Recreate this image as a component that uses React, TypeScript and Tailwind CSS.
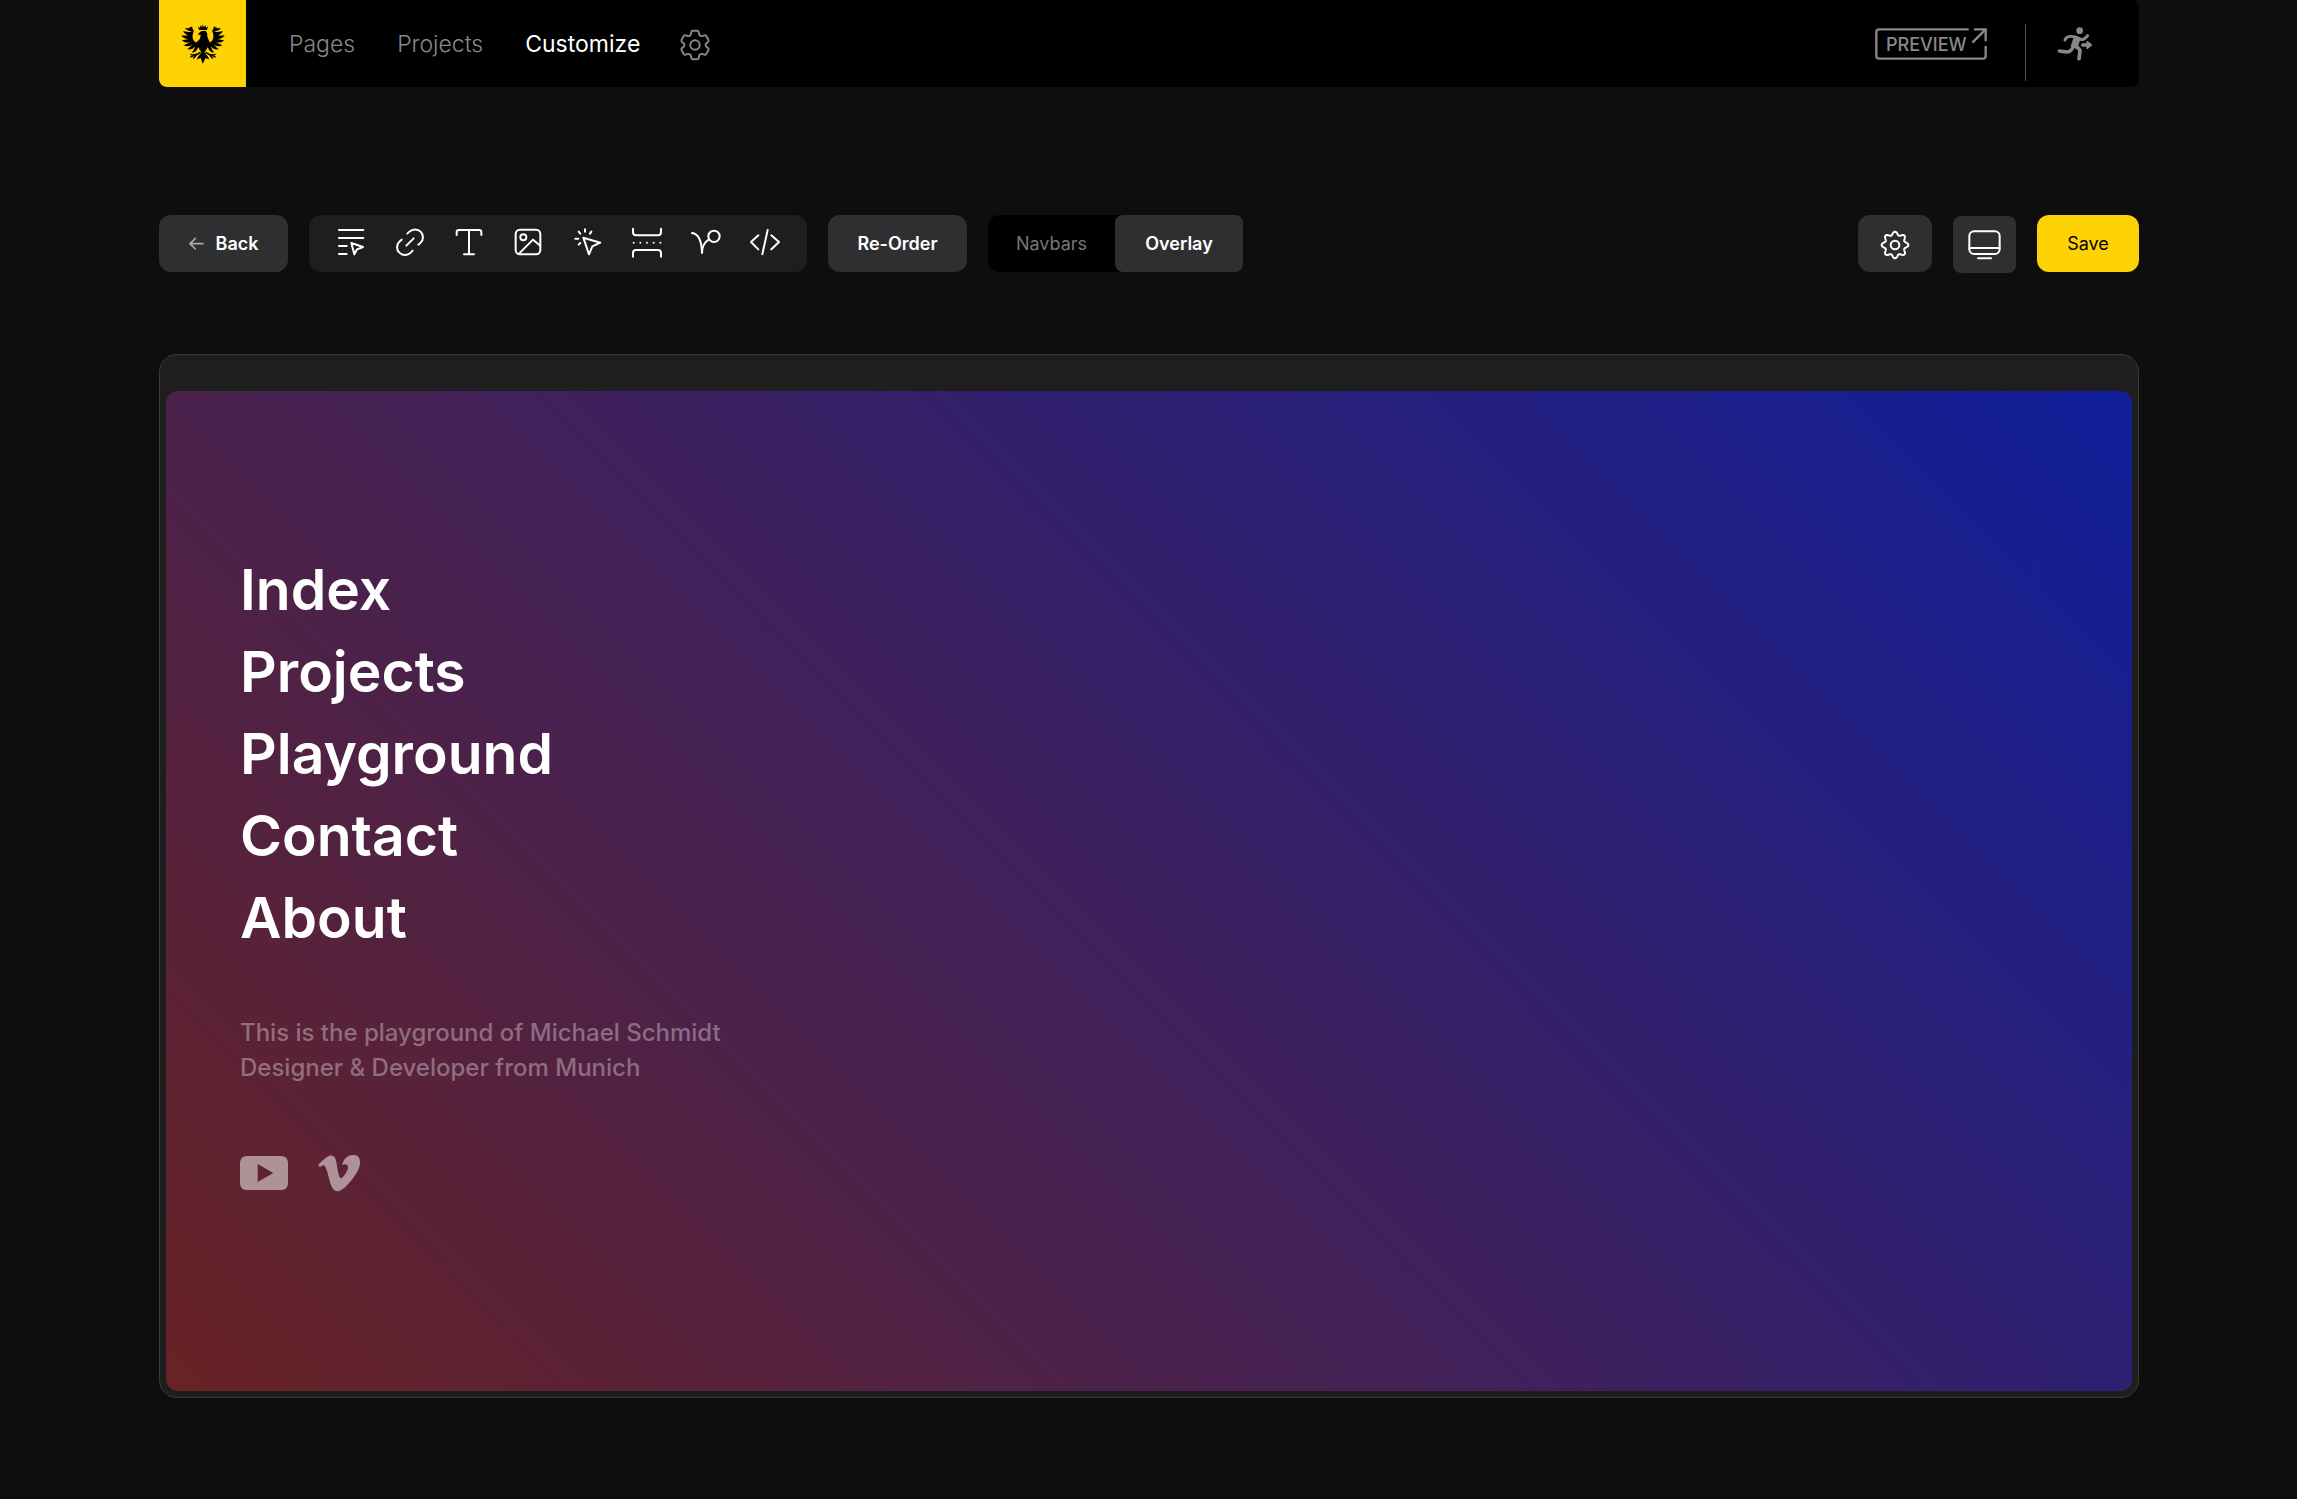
import React from 'react';
import { HiOutlineCog6Tooth } from 'react-icons/hi2';
import { FaVimeoV } from 'react-icons/fa';

const navItems = [
    { label: 'Pages', href: '#pages' },
    { label: 'Projects', href: '#projects' },
    { label: 'Customize', href: '#customize', active: true },
];

const overlayLinks = ['Index', 'Projects', 'Playground', 'Contact', 'About'];

const tools = [
    {
        label: 'Text link',
        art: (
            <>
                <path d="M9 9H82M9 33H82M9 57H32M9 81H32" />
                <path d="M46 48L81 60L63 67L55 82Z" />
            </>
        ),
    },
    {
        label: 'Link',
        art: (
            <>
                <path d="M37 20L43 14C53 5 68 5 77 14C86 23 86 38 77 47L70 53" />
                <path d="M53 71L47 77C37 86 22 86 13 77C4 68 4 53 13 44L20 38" />
                <path d="M34 56L56 34" />
            </>
        ),
    },
    {
        label: 'Text',
        art: <path d="M8 24V16Q8 9 15 9H75Q82 9 82 16V24M45 9V82M30 82H60" />,
    },
    {
        label: 'Image',
        art: (
            <>
                <rect x="8" y="8" width="74" height="74" rx="13" />
                <circle cx="31" cy="31" r="9" />
                <path d="M18 80L60 38L82 56" />
            </>
        ),
    },
    {
        label: 'Button',
        art: (
            <>
                <path d="M31 32L82 47L58 58L48 82Z" />
                <path d="M36 7V14M17 14L22 20M55 14L51 20M7 35H16M17 53L22 48" />
            </>
        ),
    },
    {
        label: 'Spacer',
        art: (
            <>
                <path d="M3 5V16Q3 25 12 25H78Q87 25 87 16V5" />
                <path d="M3 89V78Q3 69 12 69H78Q87 69 87 78V89" />
                <path d="M5 47H86" strokeDasharray="0 20" />
            </>
        ),
    },
    {
        label: 'Lottie',
        art: (
            <>
                <path d="M3 18C22 20 32 44 33 78C33 58 40 46 53 38" />
                <circle cx="69" cy="28" r="17" />
            </>
        ),
    },
    {
        label: 'Code',
        art: <path d="M25 25L3 45L25 67M53 9L37 82M64 25L87 45L64 67" />,
    },
];

// Outline of a soft gear with eight teeth, the first one pointing up
const gearOutline = Array.from({ length: 160 }, (_, i) => {
    const angle = (i / 160) * Math.PI * 2;
    const radius = 35 + 5 * Math.cos(8 * angle);
    return `${(45 + radius * Math.sin(angle)).toFixed(1)},${(45 - radius * Math.cos(angle)).toFixed(1)}`;
}).join(' ');

function EagleLogo() {
    const wing = (
        <>
            <path d="M48 55C36 52 32 40 36 26L38 20L30 22C18 26 16 36 22 46L40 66L50 70Z" />
            <path d="M36 22C28 20 18 20 12 12C20 14 30 8 34 6C31 10 36 14 38 20Z" />
            <path d="M28 34C18 34 10 28 6 20C14 22 24 22 32 26Z" />
            <path d="M28 44C16 46 6 42 1 33C10 35 20 32 30 36Z" />
            <path d="M32 52C20 57 8 55 3 47C12 47 20 43 30 44Z" />
            <path d="M38 57C28 67 16 68 8 62C18 60 24 53 34 50Z" />
            <path d="M45 61C38 74 26 78 18 74C27 70 30 62 40 55Z" />
            <path d="M52 64C50 77 41 85 32 84C40 78 40 68 47 60Z" />
            <path d="M58 84C48 92 40 94 28 90M46 92L36 102M40 92L28 98" fill="none" stroke="black" strokeWidth="4" />
        </>
    );

    return (
        <svg viewBox="0 0 131 118" className="h-10 w-11">
            <g>{wing}</g>
            <g transform="translate(131 0) scale(-1 1)">{wing}</g>
            <path d="M50 6L56 11L58 3L63 9L65 0L68 9L73 3L75 11L81 6L77 17H54Z" />
            <path d="M56 24L62 20H74L78 27V34L80 42L86 55L78 72L70 84L80 96L84 105L73 101L65 118L58 101L47 105L51 96L61 84L53 72L45 55L56 44L59 32L50 31Z" />
        </svg>
    );
}

function RunnerIcon() {
    return (
        <svg viewBox="0 0 111 105" className="h-[35px] w-[37px]" fill="none" stroke="currentColor" strokeLinecap="round" strokeLinejoin="round">
            <circle cx="68" cy="14" r="10" fill="currentColor" stroke="none" />
            <path d="M24 42C28 30 38 28 60 34L54 60" strokeWidth="9" />
            <path d="M62 36L74 41Q84 40 92 29" strokeWidth="9" />
            <path d="M54 36L66 38L58 62L46 60Z" fill="currentColor" strokeWidth="9" />
            <path d="M56 62Q70 68 69 76L66 98" strokeWidth="11" />
            <path d="M48 64Q40 78 30 78L7 75" strokeWidth="10" />
            <path d="M77 57H92" strokeWidth="10" />
            <path d="M91 48L102 57L91 66Z" fill="currentColor" strokeWidth="6" />
        </svg>
    );
}

function Header() {
    return (
        <header className="flex h-[87px] items-center rounded-r-lg rounded-bl-lg bg-black text-[#888888]">
            <a href="#home" aria-label="Home" className="flex size-[87px] items-center justify-center rounded-bl-lg bg-[#ffd303] text-black">
                <EagleLogo />
            </a>
            <nav className="ml-[43px] flex items-center gap-[42px] text-[23px] leading-8">
                {navItems.map((item) => (
                    <a key={item.label} href={item.href} className={item.active ? 'text-white' : 'font-light'}>
                        {item.label}
                    </a>
                ))}
                <a href="#settings" aria-label="Settings" className="-ml-1.5">
                    <HiOutlineCog6Tooth className="mt-0.5 size-[38px]" strokeWidth={1.2} />
                </a>
            </nav>
            <a href="#preview" className="relative ml-auto flex h-8 w-28 items-center pt-0.5 pl-[11px] text-[18px] font-medium">
                PREVIEW
                <svg viewBox="0 0 336 96" className="absolute inset-0 size-full" fill="none" stroke="currentColor" strokeWidth="7">
                    <path d="M281 4H12Q4 4 4 12V84Q4 92 12 92H324Q332 92 332 84V54" />
                    <path d="M292 44L332 4M297 4H332V40" />
                </svg>
            </a>
            <div className="mt-[18px] ml-[38px] h-[57px] w-px bg-[#4b5057]" />
            <button aria-label="Log out" className="mr-[45px] ml-[31px]">
                <RunnerIcon />
            </button>
        </header>
    );
}

function Toolbar() {
    return (
        <div className="mt-[127px] flex items-center gap-[21px] text-[18px] leading-6 font-semibold text-white">
            <button className="flex h-[57px] w-[129px] items-center justify-center gap-3 rounded-xl bg-[#2f2f31]">
                <svg viewBox="0 0 45 39" className="h-[13px] w-[15px]" fill="none" stroke="#aaaaaa" strokeWidth="5" strokeLinecap="round" strokeLinejoin="round">
                    <path d="M42 20H4M19 4L3 20L19 36" />
                </svg>
                Back
            </button>
            <div className="flex h-[57px] w-[498px] items-center justify-between rounded-xl bg-[#1e1e1e] px-[27px] pb-[3px]">
                {tools.map((tool) => (
                    <button key={tool.label} aria-label={tool.label}>
                        <svg viewBox="0 0 90 90" className="size-[30px] overflow-visible" fill="none" stroke="currentColor" strokeWidth="6" strokeLinecap="round" strokeLinejoin="round">
                            {tool.art}
                        </svg>
                    </button>
                ))}
            </div>
            <button className="h-[57px] w-[139px] rounded-xl bg-[#2f2f31]">Re-Order</button>
            <div className="flex rounded-xl bg-black">
                <button className="h-[57px] w-[127px] font-normal text-[#777777]">Navbars</button>
                <button className="h-[57px] w-32 rounded-lg bg-[#2f2f31]">Overlay</button>
            </div>
            <button aria-label="Overlay settings" className="ml-auto flex h-[57px] w-[74px] items-center justify-center rounded-xl bg-[#2f2f31]">
                <svg viewBox="0 0 90 90" className="mt-[3px] size-[30px]" fill="none" stroke="currentColor" strokeWidth="6" strokeLinejoin="round">
                    <polygon points={gearOutline} />
                    <circle cx="45" cy="45" r="13" />
                </svg>
            </button>
            <button aria-label="Desktop view" className="mt-0.5 flex h-[57px] w-[63px] items-center justify-center rounded-lg bg-[#2f2f31]">
                <svg viewBox="0 0 99 90" className="h-[30px] w-[33px]" fill="none" stroke="currentColor" strokeWidth="6" strokeLinecap="round">
                    <rect x="4" y="4" width="91" height="68" rx="14" />
                    <path d="M4 54H95" />
                    <path d="M30 85H69" />
                </svg>
            </button>
            <button className="h-[57px] w-[102px] rounded-xl bg-[#ffd303] font-normal text-black">Save</button>
        </div>
    );
}

function OverlayPreview() {
    return (
        <main className="mt-[81px] rounded-[18px] border border-[#3a3a3a] bg-[#1e1e1e] px-1.5 pt-9 pb-1.5">
            <div className="min-h-[1000px] rounded-xl bg-linear-45/srgb from-[#682324] to-[#101e9a] px-[74px] pt-[158px] pb-20">
                <nav className="flex flex-col items-start text-[57px] leading-[82px] font-semibold text-white">
                    {overlayLinks.map((label) => (
                        <a key={label} href={`#${label.toLowerCase()}`}>{label}</a>
                    ))}
                </nav>
                <p className="mt-[56px] text-[24px] leading-[35px] font-medium text-white/35">
                    This is the playground of Michael Schmidt
                    <br />
                    Designer &amp; Developer from Munich
                </p>
                <div className="mt-16 flex items-center gap-[27px] text-white/50">
                    <a href="#youtube" aria-label="YouTube">
                        <svg viewBox="0 0 144 102" className="h-[34px] w-12" fill="currentColor" fillRule="evenodd">
                            <path d="M22 0H122Q144 0 144 22V80Q144 102 122 102H22Q0 102 0 80V22Q0 0 22 0ZM53 24V78L100 51Z" />
                        </svg>
                    </a>
                    <a href="#vimeo" aria-label="Vimeo">
                        <FaVimeoV className="size-12" />
                    </a>
                </div>
            </div>
        </main>
    );
}

export default function App() {
    return (
        <div className="min-h-screen bg-[#0e0e0e] pr-[158px] pb-[101px] pl-[159px] font-[Inter,sans-serif]">
            <Header />
            <Toolbar />
            <OverlayPreview />
        </div>
    );
}
